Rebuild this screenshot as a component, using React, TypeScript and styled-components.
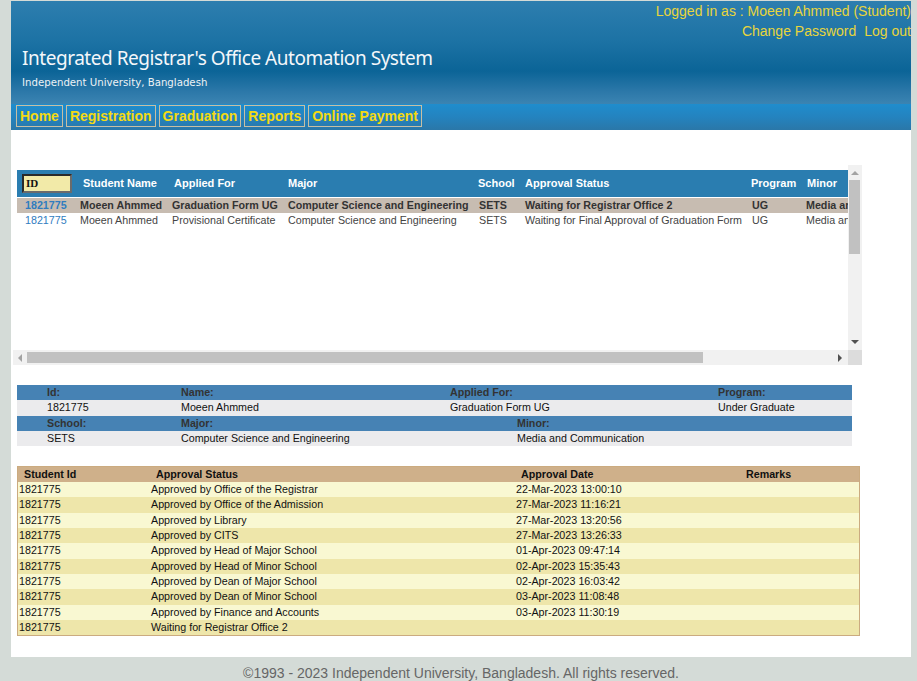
import { Fragment } from 'react';
import styled, { createGlobalStyle } from 'styled-components';

const GlobalStyle = createGlobalStyle`
  html, body {
    margin: 0;
    padding: 0;
    background-color: #d4dbd7;
    font-family: "Liberation Sans", Arial, sans-serif;
  }
`;

const Page = styled.div`
  width: 900px;
  margin-left: 11px;
  padding-top: 1px;
`;

const Header = styled.div`
  height: 103px;
  display: flex;
  flex-direction: column;
  background: linear-gradient(#2d7eaf 0%, #1c72a4 40%, #0b6497 68%, #2c78a9 88%, #3b84b2 100%);
  overflow: hidden;
`;

const UserBox = styled.div`
  display: flex;
  flex-direction: column;
  align-items: flex-end;
  font-size: 14px;
  line-height: 20px;
  color: #e8d53c;
`;

const UserLinks = styled.div`
  display: flex;
  gap: 8px;
`;

const Title = styled.div`
  margin: 5px 0 0 11px;
  font-family: "Noto Sans", "Open Sans", sans-serif;
  font-size: 19px;
  letter-spacing: -0.46px;
  line-height: 24px;
  color: #f4f7fa;
`;

const Subtitle = styled.div`
  margin: 2px 0 0 11px;
  font-family: "DejaVu Sans", sans-serif;
  font-size: 10.2px;
  line-height: 22px;
  color: #eef2f5;
`;

const MenuBar = styled.div`
  height: 25px;
  display: flex;
  align-items: flex-start;
  gap: 3px;
  padding: 1px 0 0 5px;
  background: linear-gradient(#1f8dcd 0%, #2483bf 50%, #2a77a8 100%);
`;

const MenuItem = styled.div`
  height: 20px;
  padding: 0 3px;
  border: 1px solid #c7bfa4;
  font-size: 14px;
  font-weight: bold;
  line-height: 21px;
  color: #f4da12;
`;

const Main = styled.div`
  background: #fff;
  padding: 35px 0 21px 2px;
`;

const ScrollBox = styled.div`
  width: 849px;
  display: grid;
  grid-template-columns: 835px 14px;
  grid-template-rows: 185px 15px;
`;

const Viewport = styled.div`
  overflow: hidden;
  padding: 5px 0 0 4px;
`;

const VTrack = styled.div`
  position: relative;
  background: #f1f1f1;
`;

const HTrack = styled.div`
  position: relative;
  background: #f1f1f1;
`;

const Corner = styled.div`
  background: #dcdcdc;
`;

const Thumb = styled.div`
  position: absolute;
  background: #c1c1c1;
`;

const Arrow = styled.div<{ $dir: 'up' | 'down' | 'left' | 'right'; $dark?: boolean }>`
  position: absolute;
  width: 0;
  height: 0;
  ${({ $dir, $dark }) => {
    const c = $dark ? '#505050' : '#a3a3a3';
    if ($dir === 'up') return `top: 6px; left: 3px; border-left: 4px solid transparent; border-right: 4px solid transparent; border-bottom: 4px solid ${c};`;
    if ($dir === 'down') return `bottom: 6px; left: 3px; border-left: 4px solid transparent; border-right: 4px solid transparent; border-top: 4px solid ${c};`;
    if ($dir === 'left') return `left: 5px; top: 4px; border-top: 4px solid transparent; border-bottom: 4px solid transparent; border-right: 4px solid ${c};`;
    return `right: 6px; top: 4px; border-top: 4px solid transparent; border-bottom: 4px solid transparent; border-left: 4px solid ${c};`;
  }}
`;

const ListTable = styled.div`
  width: 980px;
  display: grid;
  grid-template-columns: 60px 92px 116px 191px 46px 227px 54px 194px;
  font-size: 10.7px;
`;

const ListHead = styled.div<{ $pad: number }>`
  height: 27px;
  display: flex;
  align-items: center;
  padding-left: ${({ $pad }) => $pad}px;
  padding-bottom: 1px;
  box-sizing: border-box;
  background: #2a7db0;
  color: #fff;
  font-size: 11px;
  font-weight: bold;
  margin-bottom: 1px;
  white-space: nowrap;
`;

const IdInput = styled.div`
  width: 44px;
  height: 15px;
  border: 2px solid;
  border-color: #2a2a2a #6b6b6b #6b6b6b #2a2a2a;
  background: #f2eaa8;
  font-family: "Liberation Serif", serif;
  font-weight: bold;
  font-size: 11px;
  line-height: 15px;
  padding-left: 2px;
  color: #111;
`;

const ListCell = styled.div<{ $sel?: boolean; $first?: boolean; $link?: boolean }>`
  height: 15px;
  line-height: 15px;
  padding-left: ${({ $first }) => ($first ? 8 : 3)}px;
  background: ${({ $sel }) => ($sel ? '#c7bcb1' : '#fff')};
  font-weight: ${({ $sel }) => ($sel ? 'bold' : 'normal')};
  color: ${({ $link, $sel }) => ($link ? '#2f7cbf' : $sel ? '#333' : '#444')};
  white-space: nowrap;
  overflow: hidden;
`;

const InfoTable = styled.div`
  width: 835px;
  margin: 20px 0 0 4px;
  font-size: 10.7px;
`;

const InfoRow = styled.div<{ $head?: boolean; $cols: string }>`
  display: grid;
  grid-template-columns: ${({ $cols }) => $cols};
  padding-left: 30px;
  height: 15.3px;
  line-height: 15px;
  background: ${({ $head }) => ($head ? '#4682b4' : '#ebebed')};
  color: ${({ $head }) => ($head ? '#333' : '#111')};
  font-weight: ${({ $head }) => ($head ? 'bold' : 'normal')};
`;

const ApprovalTable = styled.div`
  width: 841px;
  margin: 20px 0 0 4px;
  border: 1px solid #cbab80;
  display: grid;
  grid-template-columns: 132px 365px 225px 1fr;
  font-size: 10.7px;
  color: #111;
`;

const ApprovalHead = styled.div`
  height: 15px;
  line-height: 15px;
  padding-left: 6px;
  background: #cfb08a;
  font-weight: bold;
`;

const ApprovalCell = styled.div<{ $alt: boolean }>`
  height: 15.3px;
  line-height: 15px;
  padding-left: 1px;
  background: ${({ $alt }) => ($alt ? '#eee6aa' : '#f9f8d2')};
  white-space: nowrap;
`;

const Footer = styled.div`
  text-align: center;
  font-size: 14px;
  line-height: 32px;
  color: #666;
`;

const list = [
  { id: '1821775', name: 'Moeen Ahmmed', applied: 'Graduation Form UG', major: 'Computer Science and Engineering', school: 'SETS', status: 'Waiting for Registrar Office 2', program: 'UG', minor: 'Media and Communication', sel: true },
  { id: '1821775', name: 'Moeen Ahmmed', applied: 'Provisional Certificate', major: 'Computer Science and Engineering', school: 'SETS', status: 'Waiting for Final Approval of Graduation Form', program: 'UG', minor: 'Media and Communication', sel: false },
];

const approvals = [
  ['Approved by Office of the Registrar', '22-Mar-2023 13:00:10'],
  ['Approved by Office of the Admission', '27-Mar-2023 11:16:21'],
  ['Approved by Library', '27-Mar-2023 13:20:56'],
  ['Approved by CITS', '27-Mar-2023 13:26:33'],
  ['Approved by Head of Major School', '01-Apr-2023 09:47:14'],
  ['Approved by Head of Minor School', '02-Apr-2023 15:35:43'],
  ['Approved by Dean of Major School', '02-Apr-2023 16:03:42'],
  ['Approved by Dean of Minor School', '03-Apr-2023 11:08:48'],
  ['Approved by Finance and Accounts', '03-Apr-2023 11:30:19'],
  ['Waiting for Registrar Office 2', ''],
];

const menu = ['Home', 'Registration', 'Graduation', 'Reports', 'Online Payment'];
const heads: [string, number][] = [
  ['Student Name', 6],
  ['Applied For', 5],
  ['Major', 3],
  ['School', 2],
  ['Approval Status', 3],
  ['Program', 2],
  ['Minor', 4],
];

export default function App() {
  return (
    <>
      <GlobalStyle />
      <Page>
        <Header>
          <UserBox>
            <div>Logged in as : Moeen Ahmmed (Student)</div>
            <UserLinks>
              <span>Change Password</span>
              <span>Log out</span>
            </UserLinks>
          </UserBox>
          <Title>Integrated Registrar's Office Automation System</Title>
          <Subtitle>Independent University, Bangladesh</Subtitle>
        </Header>
        <MenuBar>
          {menu.map((m) => (
            <MenuItem key={m}>{m}</MenuItem>
          ))}
        </MenuBar>
        <Main>
          <ScrollBox>
            <Viewport>
              <ListTable>
                <ListHead $pad={5}>
                  <IdInput>ID</IdInput>
                </ListHead>
                {heads.map(([h, p]) => (
                  <ListHead key={h} $pad={p}>{h}</ListHead>
                ))}
                {list.map((r, i) => (
                  <Fragment key={i}>
                    <ListCell $sel={r.sel} $first $link>{r.id}</ListCell>
                    <ListCell $sel={r.sel}>{r.name}</ListCell>
                    <ListCell $sel={r.sel}>{r.applied}</ListCell>
                    <ListCell $sel={r.sel}>{r.major}</ListCell>
                    <ListCell $sel={r.sel}>{r.school}</ListCell>
                    <ListCell $sel={r.sel}>{r.status}</ListCell>
                    <ListCell $sel={r.sel}>{r.program}</ListCell>
                    <ListCell $sel={r.sel}>{r.minor}</ListCell>
                  </Fragment>
                ))}
              </ListTable>
            </Viewport>
            <VTrack>
              <Arrow $dir="up" />
              <Thumb style={{ left: 1, width: 11, top: 15, height: 74 }} />
              <Arrow $dir="down" $dark />
            </VTrack>
            <HTrack>
              <Arrow $dir="left" />
              <Thumb style={{ top: 2, height: 11, left: 14, width: 676 }} />
              <Arrow $dir="right" $dark />
            </HTrack>
            <Corner />
          </ScrollBox>

          <InfoTable>
            <InfoRow $head $cols="134px 269px 268px 1fr">
              <div>Id:</div>
              <div>Name:</div>
              <div>Applied For:</div>
              <div>Program:</div>
            </InfoRow>
            <InfoRow $cols="134px 269px 268px 1fr">
              <div>1821775</div>
              <div>Moeen Ahmmed</div>
              <div>Graduation Form UG</div>
              <div>Under Graduate</div>
            </InfoRow>
            <InfoRow $head $cols="134px 336px 1fr">
              <div>School:</div>
              <div>Major:</div>
              <div>Minor:</div>
            </InfoRow>
            <InfoRow $cols="134px 336px 1fr">
              <div>SETS</div>
              <div>Computer Science and Engineering</div>
              <div>Media and Communication</div>
            </InfoRow>
          </InfoTable>

          <ApprovalTable>
            <ApprovalHead>Student Id</ApprovalHead>
            <ApprovalHead>Approval Status</ApprovalHead>
            <ApprovalHead>Approval Date</ApprovalHead>
            <ApprovalHead>Remarks</ApprovalHead>
            {approvals.map(([status, date], i) => (
              <Fragment key={i}>
                <ApprovalCell $alt={i % 2 === 1}>1821775</ApprovalCell>
                <ApprovalCell $alt={i % 2 === 1}>{status}</ApprovalCell>
                <ApprovalCell $alt={i % 2 === 1}>{date}</ApprovalCell>
                <ApprovalCell $alt={i % 2 === 1}></ApprovalCell>
              </Fragment>
            ))}
          </ApprovalTable>
        </Main>
        <Footer>©1993 - 2023 Independent University, Bangladesh. All rights reserved.</Footer>
      </Page>
    </>
  );
}
